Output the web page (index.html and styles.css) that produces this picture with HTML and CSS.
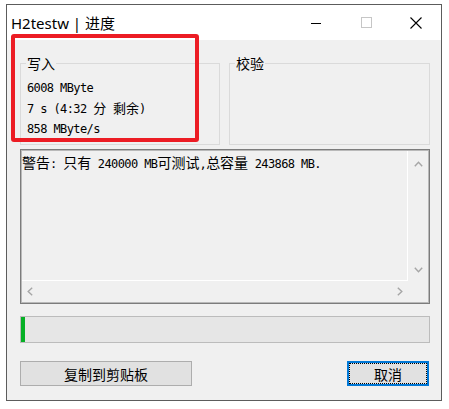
FILE: index.html
```html
<!DOCTYPE html>
<html lang="zh-CN">
<head>
  <meta charset="UTF-8" />
  <title>H2testw | 进度</title>
  <link rel="stylesheet" href="styles.css">
</head>
<body>

  <div class="window">
    <div class="titlebar">
      <span class="title">H2testw | 进度</span>
      <div class="caption-btns">
        <span class="cap">
          <svg width="10" height="10" viewBox="0 0 10 10"><path d="M0 5.5 H10" stroke="#000" stroke-width="1" /></svg>
        </span>
        <span class="cap">
          <svg width="11" height="11" viewBox="0 0 11 11"><rect x="0.5" y="0.5" width="10" height="10" fill="none" stroke="#c6c6c6" /></svg>
        </span>
        <span class="cap">
          <svg width="12" height="12" viewBox="0 0 12 12"><path d="M0.5 0.5 L11.5 11.5 M11.5 0.5 L0.5 11.5" stroke="#000" stroke-width="1.1" /></svg>
        </span>
      </div>
    </div>

    <div class="client">
      <div class="groups">
        <fieldset class="group">
          <legend>写入</legend>
          <div class="stats">
            <div>6008 MByte</div>
            <div>7 s (4:32 <span class="zh">分</span> <span class="zh">剩余</span>)</div>
            <div>858 MByte/s</div>
          </div>
        </fieldset>
        <fieldset class="group">
          <legend>校验</legend>
        </fieldset>
      </div>

      <div class="log">
        <div class="log-text"><span class="zh">警告</span>: <span class="zh">只有</span> 240000 MB<span class="zh">可测试</span>,<span class="zh">总容量</span> 243868 MB.</div>
        <div class="vscroll">
          <svg width="9" height="6" viewBox="0 0 9 6"><path d="M0.8 5.2 L4.5 1.2 L8.2 5.2" fill="none" stroke="#a6a6a6" stroke-width="1.4" /></svg>
          <svg width="9" height="6" viewBox="0 0 9 6"><path d="M0.8 0.8 L4.5 4.8 L8.2 0.8" fill="none" stroke="#a6a6a6" stroke-width="1.4" /></svg>
        </div>
        <div class="hscroll">
          <svg width="6" height="9" viewBox="0 0 6 9"><path d="M5.2 0.8 L1.2 4.5 L5.2 8.2" fill="none" stroke="#a6a6a6" stroke-width="1.4" /></svg>
          <svg width="6" height="9" viewBox="0 0 6 9"><path d="M0.8 0.8 L4.8 4.5 L0.8 8.2" fill="none" stroke="#a6a6a6" stroke-width="1.4" /></svg>
        </div>
        <div class="corner"></div>
      </div>

      <div class="progress">
        <div class="progress-fill" style="width: 4px"></div>
      </div>

      <div class="buttons">
        <button class="btn btn-copy">复制到剪贴板</button>
        <button class="btn btn-cancel">取消</button>
      </div>
    </div>

    <!-- red annotation box drawn over the screenshot -->
    <div class="highlight"></div>
  </div>

</body>
</html>
```

FILE: styles.css
```css
* {
  box-sizing: border-box;
}
body {
  margin: 0;
  background-color: #fff;
  color: #000;
  font-family: 'Noto Sans', 'Noto Sans CJK SC', sans-serif;
}
.zh {
  font-family: 'Noto Sans CJK SC', sans-serif;
  font-size: 14px;
  letter-spacing: 0;
}

.window {
  position: relative;
  width: 436px;
  height: 397px;
  margin: 4px 0 0 6px;
  border: 1px solid #5c5c5c;
  background-color: #f0f0f0;
  display: flex;
  flex-direction: column;
}
.titlebar {
  height: 35px;
  background-color: #fff;
  display: flex;
  align-items: center;
}
.title {
  padding-left: 4px;
  font-size: 15px;
}
.caption-btns {
  margin-left: auto;
  display: flex;
  height: 100%;
}
.cap {
  width: 50px;
  display: flex;
  align-items: center;
  justify-content: center;
}

.client {
  flex: 1;
  padding: 15px 11px 0 13px;
  display: flex;
  flex-direction: column;
}

.groups {
  display: grid;
  grid-template-columns: 200px 1fr;
  gap: 9px;
}
.group {
  margin: 0;
  min-width: 0;
  padding: 0 6px 5px;
  border: 1px solid #dadada;
}
.group legend {
  margin-left: -1px;
  padding: 0 1px;
  font-family: 'Noto Sans CJK SC', sans-serif;
  font-size: 14px;
  line-height: 16px;
}
.stats {
  margin-top: 7px;
  font-family: 'DejaVu Sans Mono', 'Noto Sans CJK SC', monospace;
  font-size: 12px;
  letter-spacing: -0.6px;
  line-height: 20px;
}
.stats .zh {
  font-size: 13px;
}

.log {
  margin-top: 4px;
  height: 155px;
  border: 1px solid #7c7c7c;
  padding: 1px;
  background-color: #b9b9b9;
  display: grid;
  grid-template-columns: 1fr 20px;
  grid-template-rows: 1fr 21px;
}
.log-text {
  background-color: #f0f0f0;
  border-right: 1px solid #fff;
  border-bottom: 1px solid #fff;
  padding-top: 2px;
  font-family: 'DejaVu Sans Mono', 'Noto Sans CJK SC', monospace;
  font-size: 12px;
  letter-spacing: -0.6px;
  line-height: 18px;
  white-space: nowrap;
  overflow: hidden;
}
.vscroll {
  background-color: #f0f0f0;
  display: flex;
  flex-direction: column;
  justify-content: space-between;
  align-items: center;
  padding: 10px 0 8px;
}
.hscroll {
  background-color: #f0f0f0;
  display: flex;
  justify-content: space-between;
  align-items: center;
  padding: 0 5px;
}
.corner {
  background-color: #f0f0f0;
}

.progress {
  margin-top: 12px;
  height: 27px;
  border: 1px solid #bcbcbc;
  background-color: #e6e6e6;
}
.progress-fill {
  height: 100%;
  background-color: #06b025;
}

.buttons {
  margin-top: 18px;
  display: flex;
  justify-content: space-between;
}
.btn {
  height: 25px;
  padding: 0;
  border: 1px solid #adadad;
  background-color: #e1e1e1;
  color: #000;
  font-family: 'Noto Sans CJK SC', sans-serif;
  font-size: 14px;
  line-height: 20px;
}
.btn-copy {
  width: 172px;
}
.btn-cancel {
  width: 82px;
  margin-right: 1px;
  border: 2px solid #0078d7;
  outline: 1px dotted #000;
  outline-offset: -3px;
}

.highlight {
  position: absolute;
  left: 4px;
  top: 29px;
  width: 188px;
  height: 108px;
  border: 4px solid #ec1c24;
  border-radius: 3px;
}
```
